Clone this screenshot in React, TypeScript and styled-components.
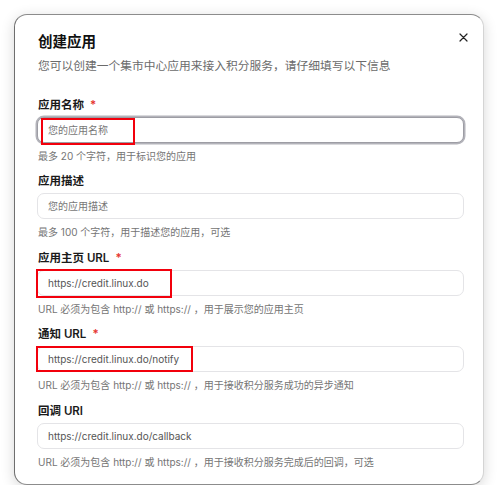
import React from 'react';
import styled, { createGlobalStyle } from 'styled-components';

interface Field {
  label: string;
  required?: boolean;
  value?: string;
  placeholder?: string;
  help: string;
  focused?: boolean;
  mark?: { left: number; top: number; width: number; height: number };
}

const fields: Field[] = [
  {
    label: '应用名称',
    required: true,
    placeholder: '您的应用名称',
    help: '最多 20 个字符，用于标识您的应用',
    focused: true,
    mark: { left: 4, top: 1, width: 94, height: 27 },
  },
  {
    label: '应用描述',
    placeholder: '您的应用描述',
    help: '最多 100 个字符，用于描述您的应用，可选',
  },
  {
    label: '应用主页 URL',
    required: true,
    value: 'https://credit.linux.do',
    help: 'URL 必须为包含 http:// 或 https:// ，用于展示您的应用主页',
    mark: { left: -1, top: -1, width: 136, height: 29 },
  },
  {
    label: '通知 URL',
    required: true,
    value: 'https://credit.linux.do/notify',
    help: 'URL 必须为包含 http:// 或 https:// ，用于接收积分服务成功的异步通知',
    mark: { left: -1, top: 0, width: 157, height: 26 },
  },
  {
    label: '回调 URI',
    value: 'https://credit.linux.do/callback',
    help: 'URL 必须为包含 http:// 或 https:// ，用于接收积分服务完成后的回调，可选',
  },
];

const App = () => {
  return (
    <>
      <GlobalStyle />
      <Dialog>
        <CloseButton aria-label="关闭">
          <svg width="9" height="9" viewBox="0 0 9 9">
            <path d="M1 1L8 8M8 1L1 8" stroke="#222" strokeWidth="1.2" strokeLinecap="round" />
          </svg>
        </CloseButton>
        <Title>创建应用</Title>
        <Subtitle>您可以创建一个集市中心应用来接入积分服务，请仔细填写以下信息</Subtitle>
        <Form>
          {fields.map((f) => (
            <Group key={f.label}>
              <Label>
                {f.label}
                {f.required && <Star>*</Star>}
              </Label>
              <InputWrap>
                <Input
                  focused={f.focused}
                  defaultValue={f.value}
                  placeholder={f.placeholder}
                  readOnly
                />
                {f.mark && (
                  <Mark
                    style={{
                      left: f.mark.left,
                      top: f.mark.top,
                      width: f.mark.width,
                      height: f.mark.height,
                    }}
                  />
                )}
              </InputWrap>
              <Help>{f.help}</Help>
            </Group>
          ))}
        </Form>
      </Dialog>
    </>
  );
};

export default App;

const GlobalStyle = createGlobalStyle`
  html, body {
    margin: 0;
    background: #ffffff;
  }
  body {
    font-family: Inter, "Noto Sans CJK SC", sans-serif;
  }
  * {
    box-sizing: border-box;
  }
`;

const Dialog = styled.div`
  position: relative;
  width: 470px;
  margin: 14px 0 0 14px;
  padding: 17px 19px 14px 22px;
  background: #ffffff;
  border: 1.5px solid #8c8c8c;
  border-left-color: #6e6e6e;
  border-right-color: #d4d4d4;
  border-radius: 13px;
  box-shadow: 0 3px 14px rgba(0, 0, 0, 0.16);
`;

const CloseButton = styled.button`
  position: absolute;
  top: 15px;
  right: 13px;
  display: flex;
  align-items: center;
  justify-content: center;
  width: 14px;
  height: 14px;
  padding: 0;
  border: none;
  background: transparent;
`;

const Title = styled.h2`
  margin: 0 0 0 1px;
  font-size: 14.5px;
  line-height: 20px;
  font-weight: 700;
  color: #111111;
`;

const Subtitle = styled.p`
  margin: 4.5px 0 0 1px;
  font-size: 11.75px;
  line-height: 18px;
  color: #6b6b6b;
`;

const Form = styled.div`
  display: flex;
  flex-direction: column;
  gap: 7.5px;
  margin-top: 20px;
`;

const Group = styled.div`
  display: flex;
  flex-direction: column;
`;

const Label = styled.label`
  margin-left: 1px;
  font-size: 11.5px;
  line-height: 20px;
  font-weight: 600;
  color: #1a1a1a;
`;

const Star = styled.span`
  margin-left: 6px;
  color: #e5322d;
`;

const InputWrap = styled.div`
  position: relative;
  margin-top: 2px;
`;

const Input = styled.input<{ focused?: boolean }>`
  display: block;
  width: 100%;
  height: 26px;
  padding: 0 10px;
  font-family: Inter, "Noto Sans CJK SC", sans-serif;
  font-size: 10px;
  color: #555555;
  background: #ffffff;
  border: 1px solid ${({ focused }) => (focused ? '#9d9da4' : '#e4e4e7')};
  border-radius: 7px;
  box-shadow: ${({ focused }) => (focused ? '0 0 0 1.5px #b3b3ba' : 'none')};
  outline: none;

  &::placeholder {
    color: #777777;
  }
`;

const Mark = styled.div`
  position: absolute;
  border: 2px solid #f2000c;
  pointer-events: none;
`;

const Help = styled.div`
  margin: 5px 0 0 1px;
  font-size: 10px;
  line-height: 16px;
  color: #757575;
`;
